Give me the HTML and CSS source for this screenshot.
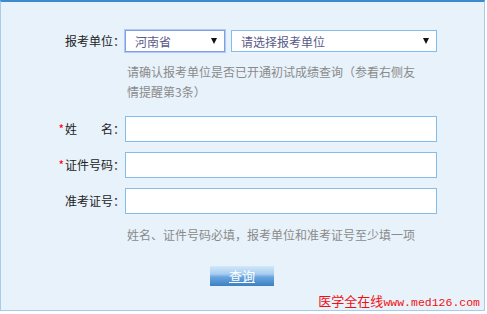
FILE: index.html
```html
<!DOCTYPE html>
<html>

<head>
    <title>成绩查询</title>
    <meta charset="utf-8">
    <link rel="stylesheet" href="styles.css">
</head>

<body>
    <div class="query-panel">
        <form class="query-form">
            <div class="form-row">
                <label class="form-label">报考单位：</label>
                <div class="select-group">
                    <div class="select-box province">
                        <select>
                            <option>河南省</option>
                        </select>
                    </div>
                    <div class="select-box unit">
                        <select>
                            <option>请选择报考单位</option>
                        </select>
                    </div>
                </div>
            </div>

            <div class="form-tip first-tip">请确认报考单位是否已开通初试成绩查询（参看右侧友情提醒第3条）</div>

            <div class="form-row input-row name-row">
                <label class="form-label"><span class="required">*</span>姓　　名：</label>
                <input type="text" class="text-input">
            </div>

            <div class="form-row input-row">
                <label class="form-label"><span class="required">*</span>证件号码：</label>
                <input type="text" class="text-input">
            </div>

            <div class="form-row input-row">
                <label class="form-label">准考证号：</label>
                <input type="text" class="text-input">
            </div>

            <div class="form-tip last-tip">姓名、证件号码必填，报考单位和准考证号至少填一项</div>

            <div class="button-row">
                <a href="#" class="query-button">查询</a>
            </div>
        </form>

        <!-- site watermark -->
        <div class="watermark">医学全在线<span class="site-url">www.med126.com</span></div>
    </div>
</body>

</html>
```

FILE: styles.css
```css
:root {
    --panel-bg: #e8f2fb;
    --panel-border: #a9cbe9;
    --top-bar: #3d8acf;
    --input-border: #84bcec;
    --label-color: #222222;
    --tip-color: #8a8a8a;
}

body {
    margin: 0;
    background: #ffffff;
    font-family: "Noto Sans CJK SC", "DejaVu Sans", sans-serif;
    font-size: 12px;
}

.query-panel {
    position: relative;
    width: 485px;
    height: 311px;
    box-sizing: border-box;
    background: var(--panel-bg);
    border: 1px solid var(--panel-border);
    border-top: 2px solid var(--top-bar);
    padding-top: 28px;
}

.query-form {
    display: flex;
    flex-direction: column;
}

.form-row {
    display: grid;
    grid-template-columns: 124px 312px;
    align-items: center;
}

.form-label {
    text-align: right;
    color: var(--label-color);
    font-size: 12px;
    white-space: nowrap;
    line-height: 20px;
}

.required {
    color: #ff0000;
    margin-right: 1px;
}

.select-group {
    display: flex;
    gap: 6px;
}

.select-box {
    position: relative;
    height: 22px;
    box-sizing: border-box;
    background: #ffffff;
    border: 1px solid var(--input-border);
}

.select-box.province {
    width: 100px;
    border-color: #7d9fe6;
    box-shadow: 0 0 0 1px #b4c8f2;
}

.select-box.unit {
    width: 206px;
}

.select-box select {
    appearance: none;
    -webkit-appearance: none;
    width: 100%;
    height: 100%;
    border: none;
    outline: none;
    background: transparent;
    padding: 0 0 0 9px;
    font-family: inherit;
    font-size: 12px;
    color: #5a5a88;
}

.select-box::after {
    content: "";
    position: absolute;
    right: 7px;
    top: 7px;
    border-left: 3px solid transparent;
    border-right: 3px solid transparent;
    border-top: 6px solid #111111;
    pointer-events: none;
}

.form-tip {
    margin-left: 126px;
    width: 296px;
    color: var(--tip-color);
    line-height: 20px;
}

.first-tip {
    margin-top: 10px;
}

.input-row {
    margin-top: 10px;
}

.name-row {
    margin-top: 14px;
}

.text-input {
    width: 312px;
    height: 26px;
    box-sizing: border-box;
    border: 1px solid var(--input-border);
    background: #ffffff;
    outline: none;
    padding: 0 4px;
    font-family: inherit;
    font-size: 12px;
}

.last-tip {
    width: 320px;
    margin-top: 11px;
}

.button-row {
    margin-top: 21px;
    padding-left: 209px;
}

.query-button {
    display: inline-block;
    width: 64px;
    height: 20px;
    line-height: 20px;
    text-align: center;
    color: #ffffff;
    font-size: 13px;
    background: linear-gradient(#d3e7f9, #a6cdf1 40%, #6aa5de 55%, #3c80c4);
}

.watermark {
    position: absolute;
    right: 4px;
    bottom: 0;
    color: #f01010;
    font-size: 13px;
    line-height: 14px;
    white-space: nowrap;
}

.site-url {
    font-family: "Liberation Mono", monospace;
    font-size: 11.5px;
}
```
